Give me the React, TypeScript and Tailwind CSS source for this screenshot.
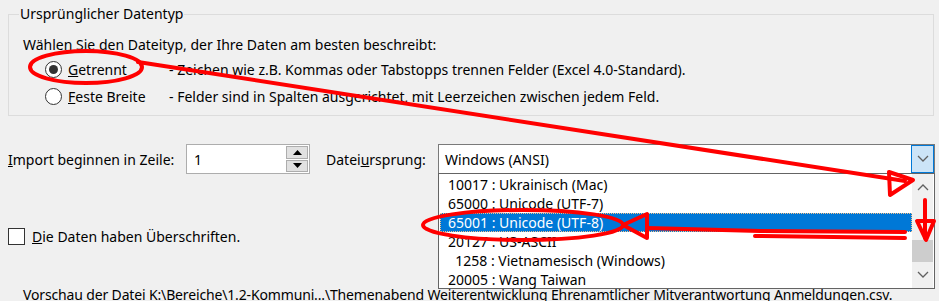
import React from "react"

const items = [
  "10017 : Ukrainisch (Mac)",
  "65000 : Unicode (UTF-7)",
  "65001 : Unicode (UTF-8)",
  "20127 : US-ASCII",
  "\u00a0\u00a01258 : Vietnamesisch (Windows)",
  "20005 : Wang Taiwan",
]

function Radio({ checked }: { checked?: boolean }) {
  return (
    <span className="flex h-[17px] w-[17px] items-center justify-center rounded-full border border-[#333] bg-white">
      {checked && <span className="h-[9px] w-[9px] rounded-full bg-[#333]" />}
    </span>
  )
}

function Chevron({ up }: { up?: boolean }) {
  return (
    <svg width="12" height="8" viewBox="0 0 12 8" className="text-[#606060]">
      <path d={up ? "M1 7 L6 2 L11 7" : "M1 1 L6 6 L11 1"} fill="none" stroke="currentColor" strokeWidth="1.3" />
    </svg>
  )
}

export default function App() {
  return (
    <div
      className="relative h-[301px] w-[939px] overflow-hidden bg-[#f0f0f0] text-[14px] text-black"
      style={{ fontFamily: '"Noto Sans", "Open Sans", sans-serif' }}
    >
      <fieldset className="mx-[8px] mr-[5px] mt-[4px] h-[112px] border border-[#dcdcdc] px-[14px]">
        <legend className="ml-[-4px] px-[1px] leading-[20px]">Ursprünglicher Datentyp</legend>
        <div className="mt-[12px] leading-[18px]">Wählen Sie den Dateityp, der Ihre Daten am besten beschreibt:</div>
        <div className="mt-[6px] flex h-[18px] items-center">
          <div className="ml-[22px] flex w-[124px] items-center gap-[6px]">
            <Radio checked />
            <span><span className="underline">G</span>etrennt</span>
          </div>
          <span>- Zeichen wie z.B. Kommas oder Tabstopps trennen Felder (Excel 4.0-Standard).</span>
        </div>
        <div className="mt-[9px] flex h-[18px] items-center">
          <div className="ml-[22px] flex w-[124px] items-center gap-[6px]">
            <Radio />
            <span><span className="underline">F</span>este Breite</span>
          </div>
          <span>- Felder sind in Spalten ausgerichtet, mit Leerzeichen zwischen jedem Feld.</span>
        </div>
      </fieldset>

      <div className="mt-[28px] flex h-[30px] items-center pl-[8px] pr-[4px]">
        <span className="w-[178px]"><span className="underline">I</span>mport beginnen in Zeile:</span>
        <div className="flex h-[30px] w-[124px] items-center border border-[#adadad] bg-white">
          <span className="flex-1 pl-[7px]">1</span>
          <div className="mr-[1px] flex h-[26px] w-[22px] flex-col gap-[1px]">
            <div className="flex flex-1 items-center justify-center border border-[#adadad] bg-[#e1e1e1]">
              <svg width="9" height="5" viewBox="0 0 9 5"><path d="M0 5 L4.5 0 L9 5Z" fill="#000" /></svg>
            </div>
            <div className="flex flex-1 items-center justify-center border border-[#adadad] bg-[#e1e1e1]">
              <svg width="9" height="5" viewBox="0 0 9 5"><path d="M0 0 L4.5 5 L9 0Z" fill="#000" /></svg>
            </div>
          </div>
        </div>
        <span className="ml-[16px] w-[112px]">Datei<span className="underline">u</span>rsprung:</span>
        <div className="relative flex h-[30px] flex-1 items-center border border-[#7a7a7a] bg-white">
          <span className="flex-1 pl-[6px]">Windows (ANSI)</span>
          <div className="flex h-full w-[23px] items-center justify-center border border-[#0078d7] bg-[#cce4f7]">
            <Chevron />
          </div>

          <div className="absolute left-[-1px] right-[-1px] top-[28px] z-10 flex h-[116px] border border-[#646464] bg-white">
            <ul className="flex-1 pt-[1px]">
              {items.map((it, i) => (
                <li
                  key={i}
                  className={
                    "ml-[1px] h-[19px] pl-[8px] leading-[19px] " +
                    (i === 2 ? "bg-[#0078d7] text-white outline outline-1 outline-dotted outline-[#f6c28b] -outline-offset-1" : "")
                  }
                >
                  {it}
                </li>
              ))}
            </ul>
            <div className="mr-[1px] flex w-[21px] flex-col items-center bg-[#f0f0f0]">
              <div className="flex h-[26px] items-center"><Chevron up /></div>
              <div className="flex-1" />
              <div className="h-[22px] w-full bg-[#cdcdcd]" />
              <div className="flex h-[26px] items-center"><Chevron /></div>
            </div>
          </div>
        </div>
      </div>

      <div className="mt-[52px] flex items-center gap-[7px] pl-[8px]">
        <span className="h-[17px] w-[17px] border border-[#333] bg-white" />
        <span><span className="underline">D</span>ie Daten haben Überschriften.</span>
      </div>

      <div className="mt-[39px] whitespace-nowrap pl-[23px] leading-[18px] tracking-[-0.15px]">
        Vorschau der Datei K:\Bereiche\1.2-Kommuni...\Themenabend Weiterentwicklung Ehrenamtlicher Mitverantwortung Anmeldungen.csv.
      </div>

      <svg className="pointer-events-none absolute inset-0 z-20" width="939" height="301" viewBox="0 0 939 301">
        <g fill="none" stroke="#ff0000" strokeWidth="4" strokeLinecap="round" strokeLinejoin="round">
          <ellipse cx="86" cy="67" rx="56" ry="16" />
          <path d="M138 62 L905 181" />
          <path d="M889 172 L913 180 L890 195 Z" />
          <path d="M925 200 L925 238" />
          <path d="M917 221 L934 221 L926 240 Z" />
          <ellipse cx="523" cy="225" rx="100" ry="15" />
          <path d="M623 225 L647 214 L647 238 Z" />
          <path d="M647 228 L760 231 L905 232" />
          <path d="M755 236 L905 238" />
        </g>
      </svg>
    </div>
  )
}
